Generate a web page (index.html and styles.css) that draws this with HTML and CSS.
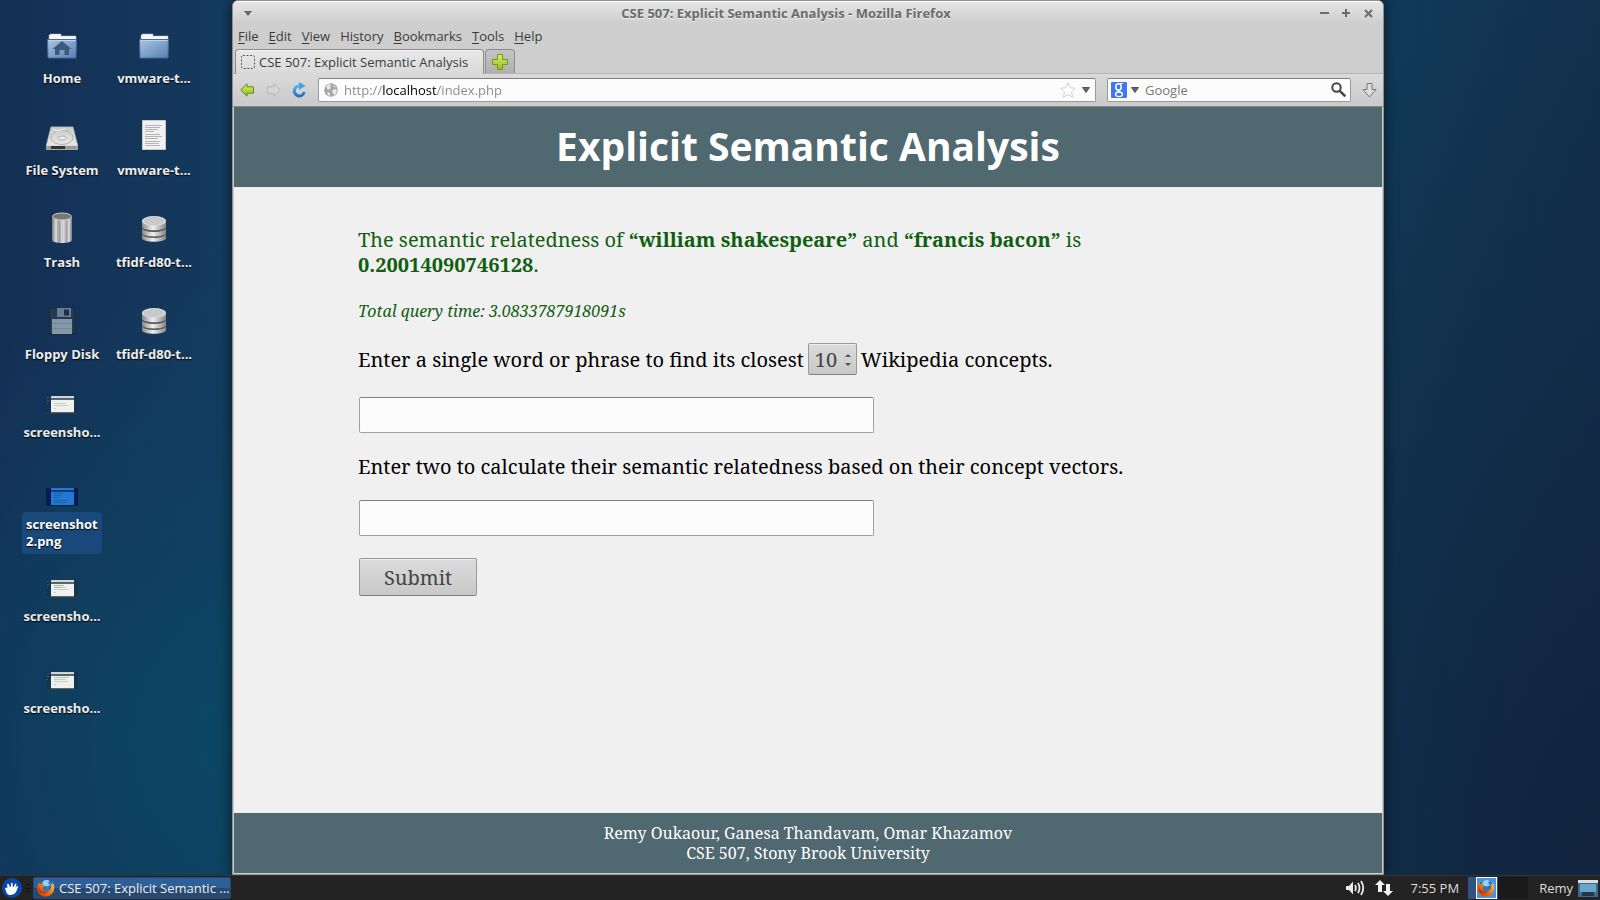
FILE: index.html
```html
<!DOCTYPE html>
<html lang="en">
<head>
<meta charset="utf-8">
<title>CSE 507: Explicit Semantic Analysis</title>
<link rel="stylesheet" href="styles.css">
</head>
<body>
<svg class="defs" aria-hidden="true">
  <defs>
    <linearGradient id="blue" x1="0" y1="0" x2="1" y2="1"><stop offset="0" stop-color="#a9c6e4"/><stop offset="1" stop-color="#5580b3"/></linearGradient>
    <linearGradient id="metal" x1="0" x2="1" y1="0" y2="0"><stop offset="0" stop-color="#777"/><stop offset=".2" stop-color="#ddd"/><stop offset=".38" stop-color="#999"/><stop offset=".52" stop-color="#eee"/><stop offset=".72" stop-color="#a5a5ad"/><stop offset=".85" stop-color="#ddd"/><stop offset="1" stop-color="#777"/></linearGradient>
    <linearGradient id="disc" x1="0" x2="1" y1="0" y2="0"><stop offset="0" stop-color="#888"/><stop offset=".45" stop-color="#f0f0f0"/><stop offset="1" stop-color="#858585"/></linearGradient>
    <linearGradient id="plate" x1="0" x2="0" y1="0" y2="1"><stop offset="0" stop-color="#cacaca"/><stop offset="1" stop-color="#e6e6e6"/></linearGradient>
    <linearGradient id="green" x1="0" x2="0" y1="0" y2="1"><stop offset="0" stop-color="#dcee6a"/><stop offset="1" stop-color="#96bd1c"/></linearGradient>
    <linearGradient id="reload" x1="0" x2="0" y1="0" y2="1"><stop offset="0" stop-color="#58b7ea"/><stop offset="1" stop-color="#2670bf"/></linearGradient>
    <linearGradient id="flame" x1="0" x2="1" y1="1" y2="0"><stop offset="0" stop-color="#c9300c"/><stop offset=".5" stop-color="#ee7413"/><stop offset="1" stop-color="#ffd93d"/></linearGradient>
    <symbol id="folder" viewBox="0 0 32 32"><path d="M3 12V7h1V6h11v2h15v5H3z" fill="#f7f7f5" stroke="#b9b9b9" stroke-width=".5"/><path d="M1.500 11.500h29l-.5 18.500H2z" fill="url(#blue)" stroke="#456a96"/><path d="M2.500 12.500h27" stroke="#bcd4ec"/></symbol>
    <symbol id="db" viewBox="0 0 32 32">
      <path d="M4 22v4c0 5 24 5 24 0v-4z" fill="url(#disc)"/><ellipse cx="16" cy="22" rx="12" ry="4" fill="#555"/>
      <path d="M4 16v5c0 4.500 24 4.500 24 0v-5z" fill="url(#disc)"/><ellipse cx="16" cy="16" rx="12" ry="4" fill="#555"/>
      <path d="M4 10v4.500c0 5 24 5 24 0V10z" fill="url(#disc)"/><ellipse cx="16" cy="9" rx="12" ry="5" fill="#d8d8d8"/><ellipse cx="16" cy="9" rx="10.500" ry="4" fill="#c9c9c9"/>
    </symbol>
    <symbol id="shot" viewBox="0 0 32 18"><path d="M0 0h32v18H0z" fill="#143552"/><path d="M5 0h23v17H5z" fill="#f0f0ee"/><path d="M5 0h23v2H5z" fill="#d4d4d2"/><path d="M5 2h23v2H5z" fill="#50686f"/><path d="M5 16h23v1H5z" fill="#50686f"/><path d="M0 17h32v1H0z" fill="#303c46"/><path d="M1 1.500h2M1 4.500h2M1 7.500h1" stroke="#3f5a74"/><path d="M8 7.500h12M8 9.500h14M8 12.500h2" stroke="#c9cbc9"/></symbol>
    <symbol id="firefox" viewBox="0 0 18 18"><circle cx="9" cy="8.500" r="7.500" fill="#2f73b8"/><path d="M6 2.500c2-2 5-2 7 0l-2 1 2 3-4 1-4-2z" fill="#91d5f0"/><path d="M15.500 3c2 3 2.500 7 .5 10.500-3 5-10.500 5.500-14 1C-.5 11 .2 6 2 3l.8 2.200L5.500 5l2 2-2 2c0 3 4 4.500 6.500 2.500 2.500-1.500 3-4.500 1.200-7.500l2.300 2z" fill="url(#flame)"/><path d="M2 7c0 4 4 7 9 5.500-2 3-7.500 2.500-9-1z" fill="#c62e0b"/></symbol>
  </defs>
</svg>

<main class="desktop">
  <ul class="launchers">
    <li><svg class="icon"><use href="#folder"/><path d="M16 13l9.500 8H23v6h-4.500v-5h-5v5H9v-6H6.500z" fill="#3d5a7c"/></svg><span>Home</span></li>
    <li><svg class="icon"><use href="#folder"/></svg><span>vmware-t...</span></li>
    <li><svg class="icon" viewBox="0 0 32 32"><path d="M5 7h22l4.500 18v4.500H.500V25z" fill="#d9d9d7" stroke="#aaa"/><path d="M5.500 7.500h21L31 25H1z" fill="url(#plate)"/><ellipse cx="16" cy="17.500" rx="11" ry="7" fill="none" stroke="#b0b0b0"/><ellipse cx="16" cy="18" rx="4" ry="2" fill="#eee" stroke="#b0b0b0"/><path d="M7 9l4 2 8-2" fill="none" stroke="#f4f4f4"/><path d="M1 26h30v3H1z" fill="#999"/><path d="M5 26h14v3H5z" fill="#333"/></svg><span>File System</span></li>
    <li><svg class="icon" viewBox="0 0 32 32"><path d="M4.500.500h23v29h-23z" fill="#f1f1f1" stroke="#c8c8c8"/><path d="M7 5.500h17M7 7.500h15M7 9.500h13M7 11.500h9M7 14.500h15M7 16.500h17M7 18.500h13M7 21.500h15M7 23.500h14M7 25.500h15" stroke="#b4b4b4"/></svg><span>vmware-t...</span></li>
    <li><svg class="icon" viewBox="0 0 32 32"><path d="M6 5v23c0 4 20 4 20 0V5z" fill="url(#metal)"/><path d="M11.500 9v20M16.500 9v21M21 9v20" stroke="#8e8e96" opacity=".4"/><ellipse cx="16" cy="4.500" rx="9.500" ry="3.500" fill="#777" stroke="#c9c9c9"/></svg><span>Trash</span></li>
    <li><svg class="icon"><use href="#db"/></svg><span>tfidf-d80-t...</span></li>
    <li><svg class="icon" viewBox="0 0 32 32"><path d="M3.500 4.500h24l1.500 2v23.500H3.500z" fill="#25384d" stroke="#1a2939"/><path d="M11 4h14v9H11z" fill="#6a7d93"/><path d="M18 5.500h5v6h-5z" fill="#1f2f44"/><path d="M6 15h20v15H6z" fill="#8397a9"/><path d="M6 19.500h20M6 24.500h20" stroke="#71869a"/></svg><span>Floppy Disk</span></li>
    <li><svg class="icon"><use href="#db"/></svg><span>tfidf-d80-t...</span></li>
    <li class="solo"><svg class="thumb"><use href="#shot"/></svg><span>screensho...</span></li>
    <li class="solo selected"><svg class="thumb" viewBox="0 0 32 18"><path d="M0 0h32v18H0z" fill="#051c54"/><path d="M5 0h23v17H5z" fill="#2478d4"/><path d="M5 2h23v2H5z" fill="#103d7c"/><path d="M8 5.500h10M8 7.500h7M8 9.500h6M8 12.500h14M8 14.500h12" stroke="#1b63a8"/></svg><span>screenshot 2.png</span></li>
    <li class="solo"><svg class="thumb" viewBox="0 0 32 18"><use href="#shot"/><path d="M8 5.500h10M8 7.500h7" stroke="#9cc29c"/></svg><span>screensho...</span></li>
    <li class="solo"><svg class="thumb" viewBox="0 0 32 18"><use href="#shot"/><path d="M8 5.500h15M8 7.500h4" stroke="#b3cdb3"/></svg><span>screensho...</span></li>
  </ul>

  <section class="window">
    <header class="titlebar">
      <button class="plain" aria-label="Window menu"><svg width="8" height="5"><path d="M0 0h8L4 5z" fill="#666"/></svg></button>
      <strong class="caption">CSE 507: Explicit Semantic Analysis - Mozilla Firefox</strong>
      <div class="controls">
        <button class="plain" aria-label="Minimize"><svg width="9" height="9"><path d="M0 4h9" stroke="#6b6b6b" stroke-width="2"/></svg></button>
        <button class="plain" aria-label="Maximize"><svg width="9" height="9"><path d="M0 4h8M4 0v8" stroke="#6b6b6b" stroke-width="2"/></svg></button>
        <button class="plain" aria-label="Close"><svg width="9" height="9"><path d="M1 1l7 7M8 1L1 8" stroke="#6b6b6b" stroke-width="2"/></svg></button>
      </div>
    </header>
    <nav class="menubar">
      <button class="plain"><u>F</u>ile</button><button class="plain"><u>E</u>dit</button><button class="plain"><u>V</u>iew</button><button class="plain">Hi<u>s</u>tory</button><button class="plain"><u>B</u>ookmarks</button><button class="plain"><u>T</u>ools</button><button class="plain"><u>H</u>elp</button>
    </nav>
    <div class="tabs">
      <button class="tab"><svg width="14" height="14"><rect x=".5" y=".5" width="13" height="13" rx="1.500" fill="none" stroke="#555" stroke-dasharray="2 1.500"/></svg>CSE 507: Explicit Semantic Analysis</button>
      <button class="tab new" aria-label="New tab"><svg width="16" height="16"><path d="M5.500.500h5v5h5v5h-5v5h-5v-5h-5v-5h5z" fill="url(#green)" stroke="#6f9a1a"/></svg></button>
    </div>
    <div class="toolbar">
      <button class="plain" aria-label="Back"><svg width="15" height="14"><path d="M.7 7L7 .8v3h6.500v6.400H7v3z" fill="url(#green)" stroke="#5e8a1c"/></svg></button>
      <button class="plain" aria-label="Forward"><svg width="15" height="14"><path d="M14.300 7L8 .8v3H1.500v6.400H8v3z" fill="#d6d6d4" stroke="#b5b5b3"/></svg></button>
      <button class="plain" aria-label="Reload"><svg width="15" height="16"><path d="M9 4.200A5 5 0 1 0 12.200 10" fill="none" stroke="url(#reload)" stroke-width="3"/><path d="M7 0l6.500 3.800L7 8z" fill="#45a5e0"/></svg></button>
      <div class="field address">
        <svg width="14" height="14"><circle cx="7" cy="7" r="6.800" fill="#a6a6a6"/><path d="M2 3.500L5 1l2 1-1 2 1 1-3 2zM8 7l4-1 1 2-2 4-2-1zM3 9l3 1v3l-2-1zM9 2l3 2-2 .5z" fill="#e9e9e9"/></svg>
        <input class="url" type="text" aria-label="Address" value="http://localhost/index.php">
        <button class="plain" aria-label="Bookmark this page"><svg width="16" height="16"><path d="M8 1l2.200 4.700 5.100.6-3.700 3.600.9 5.300L8 12.700l-4.500 2.500.9-5.300L.7 6.300l5.100-.6z" fill="#fff" stroke="#cfcfcf"/></svg></button>
        <button class="plain" aria-label="History"><svg width="8" height="6"><path d="M.5.500h7L4 5.500z" fill="#666" stroke="#555"/></svg></button>
      </div>
      <div class="field search">
        <button class="plain engine" aria-label="Search engine"><svg width="16" height="16"><rect width="16" height="16" rx="1" fill="#3e77f4"/><ellipse cx="7.500" cy="5" rx="2.700" ry="3.200" fill="none" stroke="#fff" stroke-width="1.500"/><ellipse cx="8" cy="12.300" rx="3.500" ry="2.300" fill="none" stroke="#fff" stroke-width="1.300"/><path d="M8.500 1.500H12M7 8.300c-1 .9 0 1.400 2 2" fill="none" stroke="#fff" stroke-width="1.200"/></svg><svg width="8" height="6"><path d="M.5.500h7L4 5.500z" fill="#666" stroke="#555"/></svg></button>
        <input type="text" aria-label="Search" placeholder="Google">
        <button class="plain" aria-label="Search"><svg width="16" height="16"><circle cx="5.500" cy="5.500" r="4.200" fill="none" stroke="#444" stroke-width="2"/><path d="M8.800 8.800l5.500 5.500" stroke="#444" stroke-width="2.600"/></svg></button>
      </div>
      <button class="plain downloads" aria-label="Downloads"><svg width="15" height="15"><path d="M5 .5h5v6h4l-6.500 7.500L1 6.500h4z" fill="#ddd" stroke="#777"/></svg></button>
    </div>

    <article class="page">
      <header class="masthead"><h1>Explicit Semantic Analysis</h1></header>
      <div class="content">
        <p class="result">The semantic relatedness of <b>“william shakespeare”</b> and <b>“francis bacon”</b> is<br><b>0.20014090746128</b>.</p>
        <p class="timing">Total query time: 3.0833787918091s</p>
        <form>
          <div class="prompt"><label for="phrase">Enter a single word or phrase to find its closest</label>
            <span class="picker"><select aria-label="Number of concepts"><option>10</option></select><svg width="6" height="12"><path d="M0 3l3-3 3 3zM0 9h6l-3 3z" fill="#555"/></svg></span>
            <span>Wikipedia concepts.</span></div>
          <input class="entry" id="phrase" type="text">
          <label class="prompt" for="second">Enter two to calculate their semantic relatedness based on their concept vectors.</label>
          <input class="entry" id="second" type="text">
          <button class="submit" type="button">Submit</button>
        </form>
      </div>
      <footer class="credits">Remy Oukaour, Ganesa Thandavam, Omar Khazamov<br>CSE 507, Stony Brook University</footer>
    </article>
  </section>
</main>

<footer class="panel">
  <button class="plain" aria-label="Applications"><svg width="20" height="20"><circle cx="10" cy="10" r="10" fill="#0a45a8"/><path d="M3 10l2.500-.5L5 6l1.500-.3L8 9l.8-.2L9 5l1.500-.2.300 4 .8.1 1.600-3.400 1.300.5-1 3.800 1.800-2 .8.800-1.500 4.200c-.8 2.600-3 4-6 4.200-3 .2-3.800-1.500-4.600-3.500z" fill="#fff"/></svg></button>
  <svg class="grip" width="4" height="10"><path d="M0 1.500h4M0 5.500h4M0 8.500h4" stroke="#111"/></svg>
  <button class="task"><svg width="18" height="18"><use href="#firefox"/></svg>CSE 507: Explicit Semantic ...</button>
  <div class="tray">
    <svg width="20" height="18"><path d="M0 7h3l4-4.500v13L3 11H0z" fill="#e8e8e8"/><path d="M9 6q1.700 3 0 6M12 4q3 5 0 10M15 2q4.500 7 0 14" fill="none" stroke="#e8e8e8" stroke-width="1.800"/></svg>
    <svg class="net" width="18" height="18"><path d="M5 1l5 5H7v7H3V6H0zM13 17l-5-5h3V5h4v7h3z" fill="#f0f0f0"/></svg>
    <time>7:55 PM</time>
    <div class="pager"><span class="current"><svg width="18" height="18"><use href="#firefox"/></svg></span></div>
    <span>Remy</span>
    <svg class="show" width="20" height="17"><path d="M0 0h20v17H0z" fill="#3c6a92"/><path d="M0 0h20v3H0z" fill="#d8dcde"/><path d="M2 4h16v8H2z" fill="#69a5c4"/><path d="M4 12h12v4H4z" fill="#21384a"/></svg>
  </div>
</footer>
</body>
</html>
```
FILE: styles.css
```css
* { box-sizing: border-box; }
body {
  margin: 0;
  min-height: 100vh;
  display: flex;
  flex-direction: column;
  font: 13px/18px "Open Sans", "Noto Sans", sans-serif;
  color: #3c3c3c;
}
button, input, select { font: inherit; color: inherit; margin: 0; }
svg { display: block; flex: none; }
.defs { position: absolute; width: 0; height: 0; }
.plain { background: none; border: 0; padding: 0; display: flex; align-items: center; }

.desktop {
  flex: 1;
  display: grid;
  grid-template-columns: 232px minmax(0, 1fr) 216px;
  background:
    radial-gradient(circle at 240px 740px, #0c4664 0, rgba(12, 70, 100, 0) 460px),
    radial-gradient(ellipse 520px 900px at 100% 100%, #11233d 0, rgba(17, 35, 61, 0) 100%),
    linear-gradient(to right, #142f54 0, #143a5e 14%, #103a58 86%, #12304f 100%);
}

.launchers {
  list-style: none;
  margin: 0;
  padding: 28px 0 0 16px;
  display: grid;
  grid-template-columns: 92px 92px;
  grid-auto-rows: 92px;
  align-content: start;
}
.launchers li {
  display: flex;
  flex-direction: column;
  align-items: center;
  gap: 6px;
  font-weight: 700;
  line-height: 17px;
  color: #eee;
  text-shadow: 0 1px 1px #000;
}
.launchers span { padding: 4px; }
.solo { grid-column: 1; }
.icon { width: 32px; height: 32px; }
.thumb { width: 32px; height: 18px; }
.launchers .selected span { width: 80px; padding: 4px 0 4px 4px; background: #18497a; border-radius: 4px; color: #fff; }

.window {
  display: flex;
  flex-direction: column;
  border: 1px solid #8f8f8f;
  border-radius: 6px 6px 0 0;
  background: #cecece;
  box-shadow: 0 0 14px rgba(0, 0, 0, .6);
  overflow: hidden;
}
.titlebar {
  display: flex;
  align-items: center;
  height: 23px;
  padding: 0 10px 0 11px;
  border-top: 1px solid #fff;
  background: linear-gradient(#e4e4e4, #cecece);
}
.caption { flex: 1; text-align: center; color: #6b6b6b; text-shadow: 0 1px #eee; font-weight: 700; }
.controls { display: flex; gap: 13px; }
.menubar { display: flex; gap: 10px; height: 25px; padding: 0 5px 1px; }
.menubar u { text-underline-offset: 2px; }
.tabs { display: flex; gap: 1px; height: 25px; padding-left: 2px; border-bottom: 1px solid #b5b5b5; }
.tab {
  display: flex;
  align-items: center;
  gap: 4px;
  width: 249px;
  height: 25px;
  padding: 0 5px;
  border: 1px solid #8c8c8c;
  border-bottom: 0;
  border-radius: 4px 4px 0 0;
  background: linear-gradient(#e8e8e8, #d9d9d9);
  box-shadow: inset 0 1px #f5f5f5;
}
.new { width: 30px; height: 24px; padding: 0 6px; background: linear-gradient(#c4c4c4, #b0b0b0); box-shadow: none; }
.toolbar {
  display: flex;
  align-items: center;
  gap: 11px;
  height: 33px;
  padding: 0 6px 0 7px;
  border-bottom: 1px solid #888;
  background: linear-gradient(#dadada, #cacaca);
}
.field {
  display: flex;
  align-items: center;
  height: 24px;
  border: 1px solid #999;
  border-top-color: #7d7d7d;
  border-radius: 2px;
  background: #fcfcfc;
}
.field input { flex: 1; min-width: 0; border: 0; padding: 0; background: none; outline: 0; }
.field input::placeholder { color: #777; opacity: 1; }
.address { flex: 1; gap: 6px; padding: 0 5px; }
.address .url {
  color: transparent;
  background: linear-gradient(to right, #888 39px, #000 39px, #000 93px, #888 93px);
  -webkit-background-clip: text;
  background-clip: text;
}
.search { width: 244px; gap: 6px; padding: 0 3px; }
.engine { gap: 4px; }
.downloads { width: 15px; }

.page {
  flex: 1;
  display: flex;
  flex-direction: column;
  margin: 0 1px 1px;
  background: #f0f0f0;
  font-family: "Noto Serif", "Droid Serif", "DejaVu Serif Condensed", "DejaVu Serif", serif;
  font-size: 20px;
  line-height: 25px;
  color: #000;
}
.masthead { background: #50686f; color: #fff; padding: 11px 12px 13px; }
h1 { margin: 0; text-align: center; font: bold 39px/56px "Open Sans", "Noto Sans", sans-serif; }
.content { flex: 1; width: 100%; max-width: 900px; margin: 0 auto; padding-top: 40px; }
.content p { margin: 0; }
.result, .timing { color: #115e11; }
.content .timing { margin: 20px 0 18px; font-size: 16px; line-height: 28px; font-style: italic; }
.content form { display: flex; flex-direction: column; align-items: flex-start; gap: 22px; }
.prompt { display: flex; align-items: center; gap: 4px; line-height: 23px; }
.picker { position: relative; }
.picker svg { position: absolute; right: 6px; top: 11px; }
.picker select, .submit {
  display: block;
  border: 1px solid #9a9a9a;
  border-bottom-color: #808080;
  border-radius: 2px;
  background: linear-gradient(#dcdcdc, #c8c8c8);
  box-shadow: inset 0 1px #ececec;
  color: #444;
}
.picker select { appearance: none; width: 49px; height: 32px; padding: 0 6px; }
.entry, .submit { margin-left: 1px; }
.entry { width: 515px; max-width: 100%; height: 36px; border: 1px solid #a0a0a0; border-top-color: #808080; border-radius: 2px; background: #fcfcfc; padding: 0 6px; }
.submit { width: 118px; height: 38px; padding: 0; }
.credits { background: #50686f; color: #fff; text-align: center; font-size: 16px; line-height: 20px; padding: 10px; }

.panel {
  display: flex;
  align-items: center;
  height: 25px;
  padding: 0 2px;
  border-top: 1px solid #333;
  background: #232323;
  color: #ddd;
}
.grip { margin: 0 3px 0 4px; }
.task {
  display: flex;
  align-items: center;
  gap: 4px;
  width: 198px;
  height: 22px;
  padding: 0 3px;
  border: 1px solid #224a78;
  border-radius: 2px;
  background: linear-gradient(#2f5f98 50%, #284a72 50%);
  color: #eee;
  white-space: nowrap;
}
.tray { display: flex; align-items: center; margin-left: auto; }
.net { margin: 0 18px 0 9px; }
.pager { width: 60px; height: 22px; margin: 0 11px 0 9px; background: linear-gradient(to right, #2f5480 50%, #1a1a1a 50%); }
.current { display: block; width: 21px; height: 22px; margin-left: 8px; padding: 1px 0; border: 1px solid #fff; background: #4596ea; }
.show { margin-left: 5px; }
```
